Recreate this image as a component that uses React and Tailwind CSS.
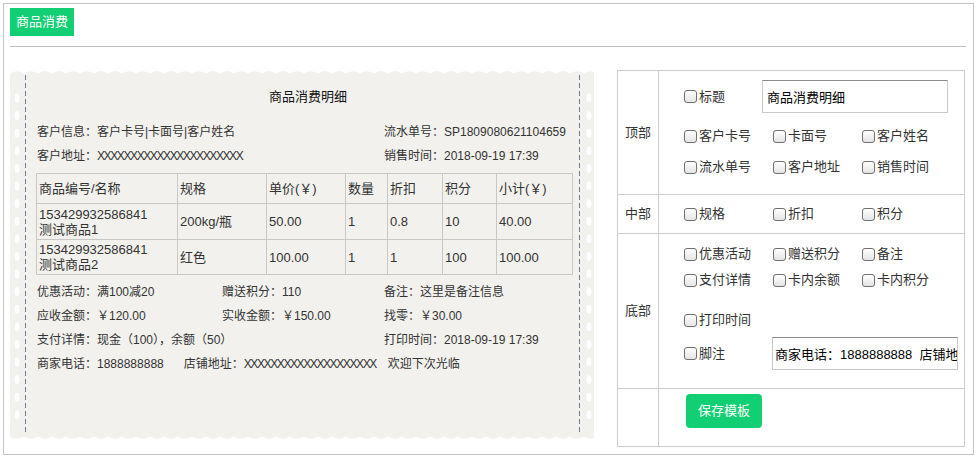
import React from 'react';

function Wave({ id, flip }) {
  return (
    <svg className={flip ? 'block w-full h-[5px] -scale-y-100' : 'block w-full h-[5px]'}>
      <defs>
        <pattern id={id} width="14" height="5" patternUnits="userSpaceOnUse">
          <path d="M0 5 V3.6 A12 12 0 0 1 14 3.6 V5 Z" fill="#f2f1ee" />
        </pattern>
      </defs>
      <rect width="100%" height="5" fill={`url(#${id})`} />
    </svg>
  );
}

function Holes({ cx }) {
  const holes = Array.from({ length: 19 }, (_, i) => 23 + i * 17.6);
  return (
    <svg width="15" height="360" className="block shrink-0">
      {holes.map((cy) => (
        <ellipse key={cy} cx={cx} cy={cy} rx="2.4" ry="4.4" fill="#fff" />
      ))}
    </svg>
  );
}

function Dash() {
  return <div className="w-[1px] shrink-0 bg-[repeating-linear-gradient(to_bottom,#6a7f96_0_5px,transparent_5px_8px)]" />;
}

function Box() {
  return (
    <input
      type="checkbox"
      className="h-[13px] w-[13px] shrink-0 appearance-none rounded-[3px] border border-[#707070] bg-gradient-to-b from-white to-[#e4e4e4]"
    />
  );
}

function Check({ label, wide }) {
  return (
    <label className={wide ? 'flex w-[88px] items-center' : 'flex w-[89px] items-center'}>
      <Box />
      <span className="ml-[2px] whitespace-nowrap">{label}</span>
    </label>
  );
}

const rows = [
  { code: '153429932586841', name: '测试商品1', spec: '200kg/瓶', price: '50.00', qty: '1', off: '0.8', pts: '10', sub: '40.00' },
  { code: '153429932586841', name: '测试商品2', spec: '红色', price: '100.00', qty: '1', off: '1', pts: '100', sub: '100.00' }
];

export default function App() {
  return (
    <div className="p-[3px] font-['Liberation_Sans','Noto_Sans_CJK_SC',sans-serif] text-[#333]">
      <div className="h-[452px] border border-[#c4c4c4] pl-[6px] pr-[7px] pt-[4px]">
        <button className="h-[28px] bg-[#12cf74] px-[6px] text-[13px] leading-[28px] text-white">商品消费</button>
        <div className="mt-[10px] border-t border-[#bdbdbd]" />

        <div className="mt-[23px] flex items-start gap-[23px]">
          {/* receipt preview */}
          <div className="flex h-[370px] w-[584px] shrink-0 flex-col">
            <Wave id="wave-top" />
            <div className="flex h-[360px] bg-[#f2f1ee]">
              <Holes cx={7} />
              <Dash />
              <div className="flex-1 pl-[11px] pr-[6px] text-[12px]">
                <div className="pl-[6px] pt-[12px] text-center text-[13px] leading-[20px] text-[#111]">商品消费明细</div>
                <div className="mt-[13px] grid grid-cols-[347px_1fr] leading-[24px]">
                  <div>客户信息：客户卡号|卡面号|客户姓名</div>
                  <div>流水单号：SP1809080621104659</div>
                  <div>
                    客户地址：<span className="tracking-[-1.4px]">XXXXXXXXXXXXXXXXXXXXXX</span>
                  </div>
                  <div>销售时间：2018-09-19 17:39</div>
                </div>

                <table className="-ml-[1px] mt-[5px] w-[536px] table-fixed border-collapse text-[13px] leading-[15px]">
                  <colgroup>
                    <col className="w-[141px]" />
                    <col className="w-[89px]" />
                    <col className="w-[79px]" />
                    <col className="w-[42px]" />
                    <col className="w-[55px]" />
                    <col className="w-[54px]" />
                    <col className="w-[76px]" />
                  </colgroup>
                  <thead>
                    <tr className="h-[30px] text-left">
                      {['商品编号/名称', '规格', '单价(￥)', '数量', '折扣', '积分', '小计(￥)'].map((h) => (
                        <th key={h} className="border border-[#c8c8c8] pl-[2px] font-normal">{h}</th>
                      ))}
                    </tr>
                  </thead>
                  <tbody>
                    {rows.map((r, i) => (
                      <tr key={r.name} className={i === 0 ? 'h-[36px]' : 'h-[35px]'}>
                        <td className="border border-[#c8c8c8] pl-[2px]">
                          {r.code}
                          <br />
                          {r.name}
                        </td>
                        <td className="border border-[#c8c8c8] pl-[2px]">{r.spec}</td>
                        <td className="border border-[#c8c8c8] pl-[2px]">{r.price}</td>
                        <td className="border border-[#c8c8c8] pl-[2px]">{r.qty}</td>
                        <td className="border border-[#c8c8c8] pl-[2px]">{r.off}</td>
                        <td className="border border-[#c8c8c8] pl-[2px]">{r.pts}</td>
                        <td className="border border-[#c8c8c8] pl-[2px]">{r.sub}</td>
                      </tr>
                    ))}
                  </tbody>
                </table>

                <div className="mt-[5px] grid grid-cols-[185px_162px_1fr] leading-[24px]">
                  <div>优惠活动：满100减20</div>
                  <div>赠送积分：110</div>
                  <div>备注：这里是备注信息</div>
                  <div>应收金额：￥120.00</div>
                  <div>实收金额：￥150.00</div>
                  <div>找零：￥30.00</div>
                  <div className="col-span-2">支付详情：现金（100），余额（50）</div>
                  <div>打印时间：2018-09-19 17:39</div>
                </div>
                <div className="whitespace-nowrap leading-[24px]">
                  商家电话：1888888888
                  <span className="ml-[20px]">
                    店铺地址：<span className="tracking-[-1.4px]">XXXXXXXXXXXXXXXXXXXX</span>
                  </span>
                  <span className="ml-[12px]">欢迎下次光临</span>
                </div>
              </div>
              <Dash />
              <Holes cx={9} />
            </div>
            <Wave id="wave-bottom" flip />
          </div>

          {/* settings */}
          <table className="w-[348px] shrink-0 table-fixed border-collapse border border-[#ccc] text-[13px]">
            <colgroup>
              <col className="w-[41px]" />
              <col />
            </colgroup>
            <tbody>
              <tr>
                <td className="h-[124px] border border-[#ccc] text-center align-middle">顶部</td>
                <td className="h-[124px] border border-[#ccc] pl-[25px] align-top">
                  <div className="mt-[9px] flex items-center">
                    <div className="flex w-[78px] items-center">
                      <Box />
                      <span className="ml-[2px]">标题</span>
                    </div>
                    <input
                      readOnly
                      defaultValue="商品消费明细"
                      className="h-[33px] w-[186px] border border-[#c8c8c8] border-t-[#8a8a8a] bg-white pl-[4px] text-[13px] text-black outline-none"
                    />
                  </div>
                  <div className="mt-[13px] flex h-[20px]">
                    <Check label="客户卡号" />
                    <Check label="卡面号" />
                    <Check label="客户姓名" />
                  </div>
                  <div className="mt-[11px] flex h-[20px]">
                    <Check label="流水单号" />
                    <Check label="客户地址" />
                    <Check label="销售时间" />
                  </div>
                </td>
              </tr>
              <tr>
                <td className="h-[39px] border border-[#ccc] text-center align-middle">中部</td>
                <td className="h-[39px] border border-[#ccc] pl-[25px] align-middle">
                  <div className="flex h-[20px]">
                    <Check label="规格" />
                    <Check label="折扣" />
                    <Check label="积分" />
                  </div>
                </td>
              </tr>
              <tr>
                <td className="h-[155px] border border-[#ccc] text-center align-middle">底部</td>
                <td className="h-[155px] border border-[#ccc] pl-[25px] align-top">
                  <div className="mt-[10px] flex h-[20px]">
                    <Check label="优惠活动" />
                    <Check label="赠送积分" />
                    <Check label="备注" />
                  </div>
                  <div className="mt-[6px] flex h-[20px]">
                    <Check label="支付详情" />
                    <Check label="卡内余额" />
                    <Check label="卡内积分" />
                  </div>
                  <div className="mt-[20px] flex h-[20px]">
                    <Check label="打印时间" />
                  </div>
                  <div className="mt-[7px] flex items-center">
                    <Check label="脚注" wide />
                    <input
                      readOnly
                      defaultValue="商家电话：1888888888  店铺地址：XXXXXXXXXXXXXXXXXXXX  欢迎下次光临"
                      className="h-[33px] w-[186px] border border-[#c8c8c8] border-t-[#8a8a8a] bg-white pl-[2px] text-[13px] text-black outline-none"
                    />
                  </div>
                </td>
              </tr>
              <tr>
                <td className="h-[58px] border border-[#ccc]" />
                <td className="h-[58px] border border-[#ccc] pl-[27px] align-top">
                  <button className="mt-[5px] h-[34px] w-[76px] rounded-[4px] bg-[#12cf74] text-[13px] text-white">保存模板</button>
                </td>
              </tr>
            </tbody>
          </table>
        </div>
      </div>
    </div>
  );
}
